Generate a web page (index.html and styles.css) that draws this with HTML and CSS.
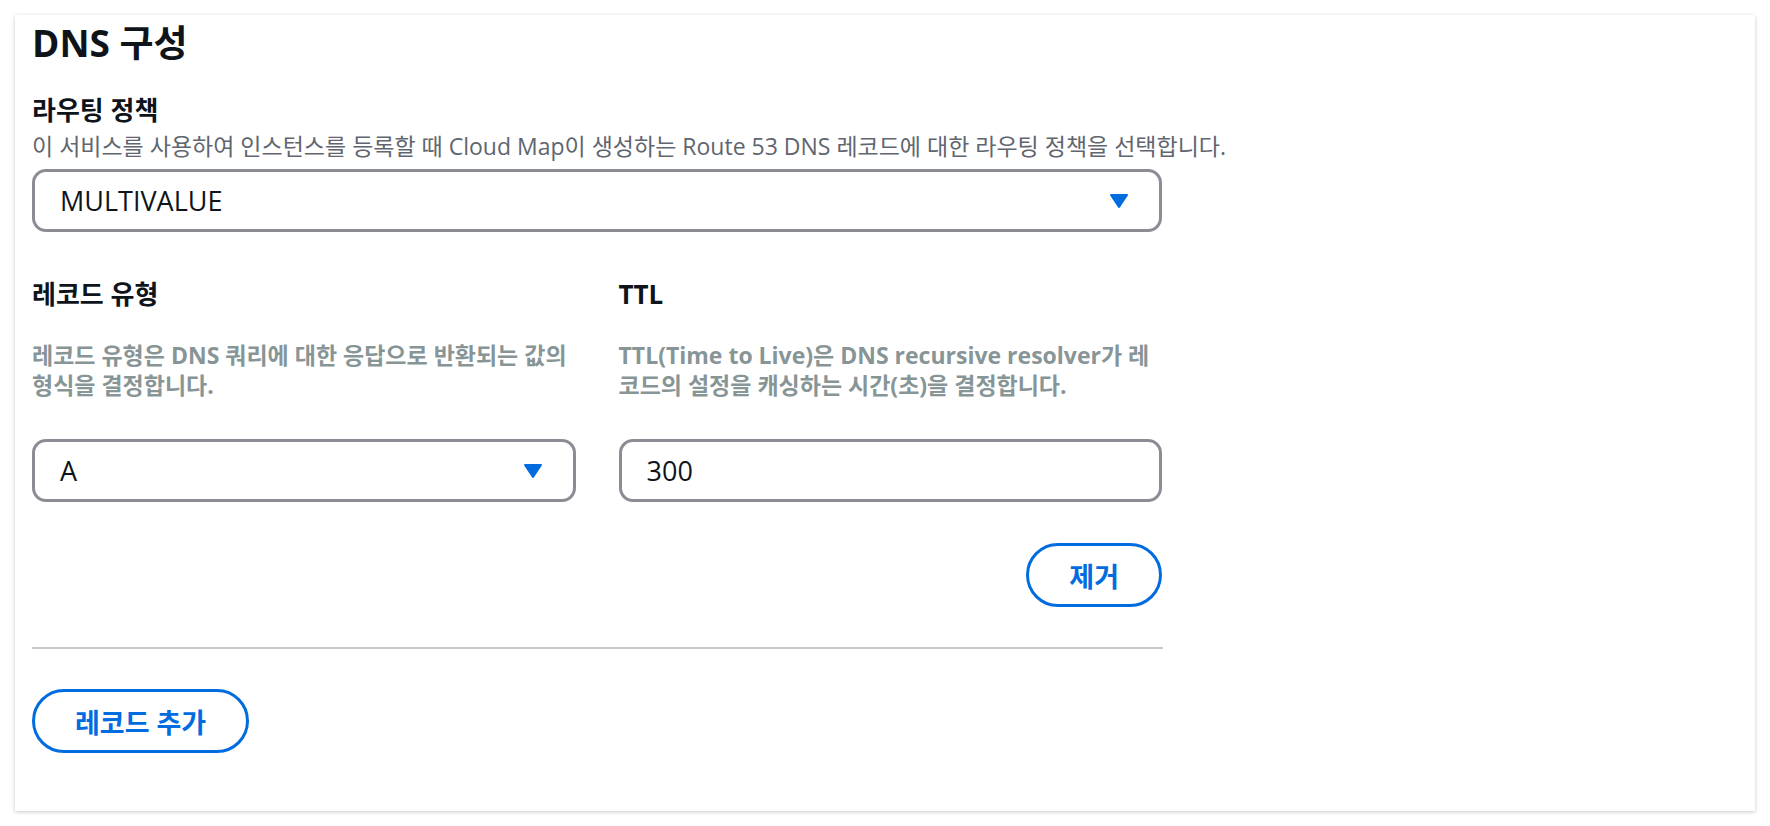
FILE: index.html
```html
<!DOCTYPE html>
<html lang="ko">
<head>
    <meta charset="UTF-8">
    <meta name="viewport" content="width=device-width, initial-scale=1.0">
    <title>DNS 구성</title>
    <link rel="stylesheet" href="styles.css">
</head>
<body>
    <div class="page">
        <div class="card">
            <h2 class="title">DNS 구성</h2>

            <div class="field">
                <label class="label">라우팅 정책</label>
                <p class="desc">이 서비스를 사용하여 인스턴스를 등록할 때 Cloud Map이 생성하는 Route 53 DNS 레코드에 대한 라우팅 정책을 선택합니다.</p>
                <div class="select wide">
                    <span>MULTIVALUE</span>
                    <svg class="caret" width="20" height="16" viewBox="0 0 20 16"><path d="M2 2 H18 L10 14 Z"/></svg>
                </div>
            </div>

            <div class="cols">
                <div class="col">
                    <label class="label">레코드 유형</label>
                    <p class="hint">레코드 유형은 DNS 쿼리에 대한 응답으로 반환되는 값의 형식을 결정합니다.</p>
                    <div class="select">
                        <span>A</span>
                        <svg class="caret" width="20" height="16" viewBox="0 0 20 16"><path d="M2 2 H18 L10 14 Z"/></svg>
                    </div>
                </div>
                <div class="col">
                    <label class="label">TTL</label>
                    <p class="hint">TTL(Time to Live)은 DNS recursive resolver가 레코드의 설정을 캐싱하는 시간(초)을 결정합니다.</p>
                    <input class="input" type="text" value="300">
                </div>
            </div>

            <div class="actions">
                <button class="btn">제거</button>
            </div>

            <hr class="divider">

            <button class="btn add">레코드 추가</button>
        </div>
    </div>
</body>
</html>
```

FILE: styles.css
```css
body {
    margin: 0;
    font-family: "Open Sans", "Noto Sans CJK KR", sans-serif;
    color: #0f141a;
    background: #fff;
}
.page {
    padding: 15px;
}
.card {
    background: #fff;
    box-shadow: 0 1px 4px rgba(0, 7, 22, 0.22);
    padding: 7px 17px 58px;
}
.title {
    margin: 0;
    font-size: 37px;
    line-height: 42px;
    font-weight: 700;
}
.field {
    margin-top: 31px;
}
.label {
    display: block;
    font-size: 26px;
    line-height: 30px;
    font-weight: 700;
}
.desc {
    margin: 7px 0 0;
    font-size: 23px;
    line-height: 28px;
    color: #5f6670;
}
.select,
.input {
    box-sizing: border-box;
    width: 100%;
    height: 63px;
    border: 3px solid #8c8c94;
    border-radius: 14px;
    background: #fff;
    font-family: inherit;
    font-size: 27px;
    color: #0f141a;
}
.select {
    display: flex;
    align-items: center;
    justify-content: space-between;
    padding: 0 30px 0 25px;
}
.select.wide {
    width: 1130px;
    margin-top: 9px;
}
.caret {
    fill: #006ce0;
    stroke: #006ce0;
    stroke-width: 2;
    stroke-linejoin: round;
}
.input {
    padding: 0 25px;
    outline: none;
}
.cols {
    display: grid;
    grid-template-columns: 1fr 1fr;
    gap: 43px;
    width: 1130px;
    margin-top: 47px;
}
.hint {
    margin: 31px 0 39px;
    font-size: 23px;
    line-height: 30px;
    font-weight: 700;
    color: #879596;
}
.actions {
    width: 1130px;
    display: flex;
    justify-content: flex-end;
    margin-top: 41px;
}
.btn {
    height: 64px;
    padding: 0 40px;
    border: 3px solid #006ce0;
    border-radius: 32px;
    background: #fff;
    color: #006ce0;
    font-family: inherit;
    font-size: 27px;
    font-weight: 700;
    cursor: pointer;
}
.divider {
    width: 1131px;
    margin: 40px 0 0;
    border: 0;
    border-top: 2px solid #c6c6cd;
}
.add {
    margin-top: 40px;
}
```
